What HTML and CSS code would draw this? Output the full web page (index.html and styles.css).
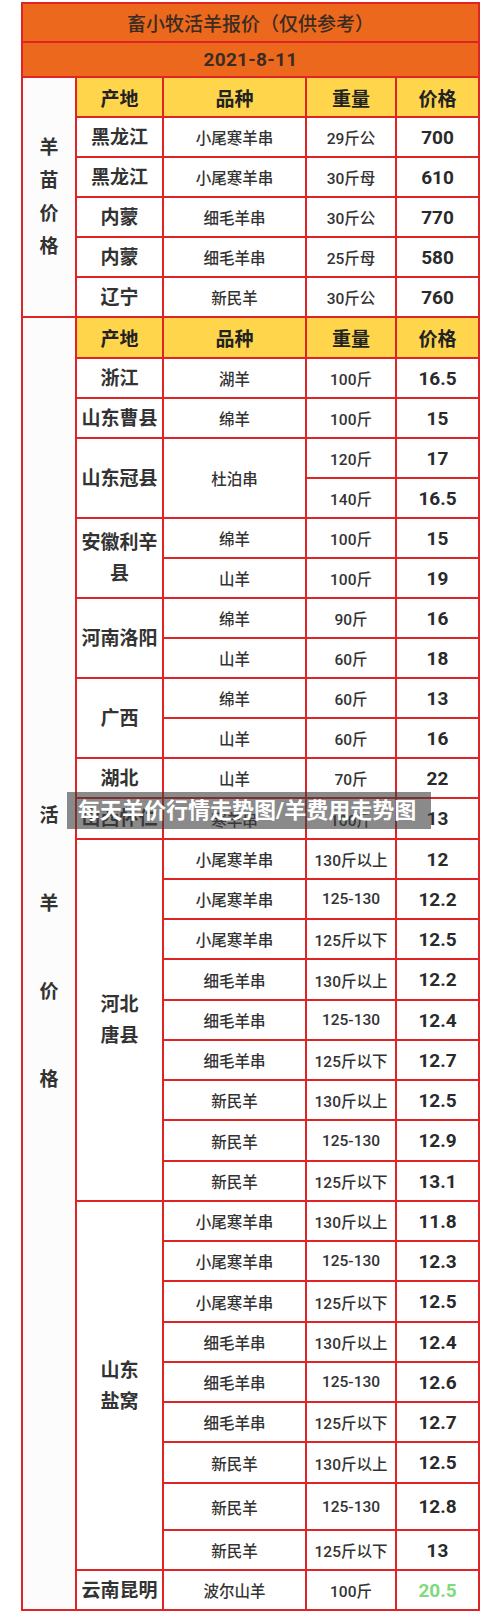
FILE: index.html
```html
<!DOCTYPE html>
<html lang="zh-CN">
<head>
<meta charset="utf-8">
<title>畜小牧活羊报价</title>
<link rel="stylesheet" href="styles.css">
</head>
<body>
<div class="page">
  <div class="sheet">
    <div class="cell title all">畜小牧活羊报价（仅供参考）</div>
    <div class="cell date all">2021-8-11</div>

    <div class="cell label c1 rs6 lab1"><span>羊</span><span>苗</span><span>价</span><span>格</span></div>
    <div class="cell head c2">产地</div><div class="cell head c3">品种</div><div class="cell head c4">重量</div><div class="cell head c5">价格</div>
    <div class="cell origin c2">黑龙江</div><div class="cell variety c3">小尾寒羊串</div><div class="cell weight c4">29斤公</div><div class="cell price c5">700</div>
    <div class="cell origin c2">黑龙江</div><div class="cell variety c3">小尾寒羊串</div><div class="cell weight c4">30斤母</div><div class="cell price c5">610</div>
    <div class="cell origin c2">内蒙</div><div class="cell variety c3">细毛羊串</div><div class="cell weight c4">30斤公</div><div class="cell price c5">770</div>
    <div class="cell origin c2">内蒙</div><div class="cell variety c3">细毛羊串</div><div class="cell weight c4">25斤母</div><div class="cell price c5">580</div>
    <div class="cell origin c2">辽宁</div><div class="cell variety c3">新民羊</div><div class="cell weight c4">30斤公</div><div class="cell price c5">760</div>

    <div class="cell label c1 rs32 lab2"><span>活</span><span>羊</span><span>价</span><span>格</span></div>
    <div class="cell head c2">产地</div><div class="cell head c3">品种</div><div class="cell head c4">重量</div><div class="cell head c5">价格</div>
    <div class="cell origin c2">浙江</div><div class="cell variety c3">湖羊</div><div class="cell weight c4">100斤</div><div class="cell price c5">16.5</div>
    <div class="cell origin c2">山东曹县</div><div class="cell variety c3">绵羊</div><div class="cell weight c4">100斤</div><div class="cell price c5">15</div>
    <div class="cell origin c2 rs2">山东冠县</div><div class="cell variety c3 rs2">杜泊串</div><div class="cell weight c4">120斤</div><div class="cell price c5">17</div>
    <div class="cell weight c4">140斤</div><div class="cell price c5">16.5</div>
    <div class="cell origin c2 rs2">安徽利辛县</div><div class="cell variety c3">绵羊</div><div class="cell weight c4">100斤</div><div class="cell price c5">15</div>
    <div class="cell variety c3">山羊</div><div class="cell weight c4">100斤</div><div class="cell price c5">19</div>
    <div class="cell origin c2 rs2">河南洛阳</div><div class="cell variety c3">绵羊</div><div class="cell weight c4">90斤</div><div class="cell price c5">16</div>
    <div class="cell variety c3">山羊</div><div class="cell weight c4">60斤</div><div class="cell price c5">18</div>
    <div class="cell origin c2 rs2">广西</div><div class="cell variety c3">绵羊</div><div class="cell weight c4">60斤</div><div class="cell price c5">13</div>
    <div class="cell variety c3">山羊</div><div class="cell weight c4">60斤</div><div class="cell price c5">16</div>
    <div class="cell origin c2">湖北</div><div class="cell variety c3">山羊</div><div class="cell weight c4">70斤</div><div class="cell price c5">22</div>
    <div class="cell origin c2">山西怀仁</div><div class="cell variety c3">寒羊串</div><div class="cell weight c4">100斤</div><div class="cell price c5">13</div>

    <div class="cell origin c2 rs9">河北<br>唐县</div>
    <div class="cell variety c3">小尾寒羊串</div><div class="cell weight c4">130斤以上</div><div class="cell price c5">12</div>
    <div class="cell variety c3">小尾寒羊串</div><div class="cell weight c4">125-130</div><div class="cell price c5">12.2</div>
    <div class="cell variety c3">小尾寒羊串</div><div class="cell weight c4">125斤以下</div><div class="cell price c5">12.5</div>
    <div class="cell variety c3">细毛羊串</div><div class="cell weight c4">130斤以上</div><div class="cell price c5">12.2</div>
    <div class="cell variety c3">细毛羊串</div><div class="cell weight c4">125-130</div><div class="cell price c5">12.4</div>
    <div class="cell variety c3">细毛羊串</div><div class="cell weight c4">125斤以下</div><div class="cell price c5">12.7</div>
    <div class="cell variety c3">新民羊</div><div class="cell weight c4">130斤以上</div><div class="cell price c5">12.5</div>
    <div class="cell variety c3">新民羊</div><div class="cell weight c4">125-130</div><div class="cell price c5">12.9</div>
    <div class="cell variety c3">新民羊</div><div class="cell weight c4">125斤以下</div><div class="cell price c5">13.1</div>

    <div class="cell origin c2 rs9">山东<br>盐窝</div>
    <div class="cell variety c3">小尾寒羊串</div><div class="cell weight c4">130斤以上</div><div class="cell price c5">11.8</div>
    <div class="cell variety c3">小尾寒羊串</div><div class="cell weight c4">125-130</div><div class="cell price c5">12.3</div>
    <div class="cell variety c3">小尾寒羊串</div><div class="cell weight c4">125斤以下</div><div class="cell price c5">12.5</div>
    <div class="cell variety c3">细毛羊串</div><div class="cell weight c4">130斤以上</div><div class="cell price c5">12.4</div>
    <div class="cell variety c3">细毛羊串</div><div class="cell weight c4">125-130</div><div class="cell price c5">12.6</div>
    <div class="cell variety c3">细毛羊串</div><div class="cell weight c4">125斤以下</div><div class="cell price c5">12.7</div>
    <div class="cell variety c3">新民羊</div><div class="cell weight c4">130斤以上</div><div class="cell price c5">12.5</div>
    <div class="cell variety c3">新民羊</div><div class="cell weight c4">125-130</div><div class="cell price c5">12.8</div>
    <div class="cell variety c3">新民羊</div><div class="cell weight c4">125斤以下</div><div class="cell price c5">13</div>

    <div class="cell origin c2">云南昆明</div><div class="cell variety c3">波尔山羊</div><div class="cell weight c4">100斤</div><div class="cell price c5 green">20.5</div>
  </div>
  <div class="banner">每天羊价行情走势图/羊费用走势图</div>
</div>
</body>
</html>
```
FILE: styles.css
```css
html, body {
  margin: 0;
  padding: 0;
  background: #ffffff;
}
body {
  font-family: Roboto, "Noto Sans CJK SC", "Noto Sans", "DejaVu Sans", sans-serif;
  color: #333333;
}
.page {
  position: relative;
  width: 500px;
  height: 1621px;
  padding-top: 2px;
  box-sizing: border-box;
}
.sheet {
  margin-left: 21px;
  width: 459px;
  box-sizing: border-box;
  padding: 2px;
  background: #de2424;
  display: grid;
  gap: 2px;
  grid-template-columns: 52px 85px 141px 88px 81px;
  grid-template-rows:
    37px 33px
    repeat(6, 38px)
    39px
    repeat(10, 38px)
    38px 39px
    repeat(4, 38px 38px 38px 39px)
    45px 38px 38px;
}
.cell {
  background: #ffffff;
  display: flex;
  align-items: center;
  justify-content: center;
  text-align: center;
}
.all { grid-column: 1 / 6; }
.c1 { grid-column: 1; }
.c2 { grid-column: 2; }
.c3 { grid-column: 3; }
.c4 { grid-column: 4; }
.c5 { grid-column: 5; }
.rs2 { grid-row: span 2; }
.rs6 { grid-row: span 6; }
.rs9 { grid-row: span 9; }
.rs32 { grid-row: span 32; }

.title {
  background: #ec681d;
  color: #3b2c22;
  font-size: 19px;
  font-weight: 500;
}
.date {
  background: #ec681d;
  color: #3b2c22;
  font-size: 19px;
  font-weight: 700;
  letter-spacing: 0.3px;
}
.head {
  background: #ffd54c;
  color: #222222;
  font-size: 19px;
  font-weight: 700;
}
.label {
  background: #fcfcfc;
  flex-direction: column;
  font-size: 19px;
  font-weight: 700;
  color: #333333;
}
.lab1 span { line-height: 33px; }
.lab2 { padding-bottom: 32px; box-sizing: border-box; }
.lab2 span { line-height: 88px; }
.origin {
  font-size: 19px;
  font-weight: 700;
  line-height: 31px;
  color: #333333;
}
.variety {
  font-size: 15.5px;
  font-weight: 500;
  color: #333333;
}
.weight {
  font-size: 15.5px;
  font-weight: 500;
  color: #333333;
}
.price {
  font-size: 19px;
  font-weight: 700;
  color: #2a2a2a;
}
.green { color: #7ddb7d; }

.banner {
  position: absolute;
  left: 67px;
  top: 792px;
  width: 364px;
  height: 37px;
  box-sizing: border-box;
  padding-left: 11px;
  background: rgba(60, 60, 60, 0.6);
  color: #ffffff;
  font-size: 22px;
  font-weight: 700;
  line-height: 37px;
  white-space: nowrap;
}
```
